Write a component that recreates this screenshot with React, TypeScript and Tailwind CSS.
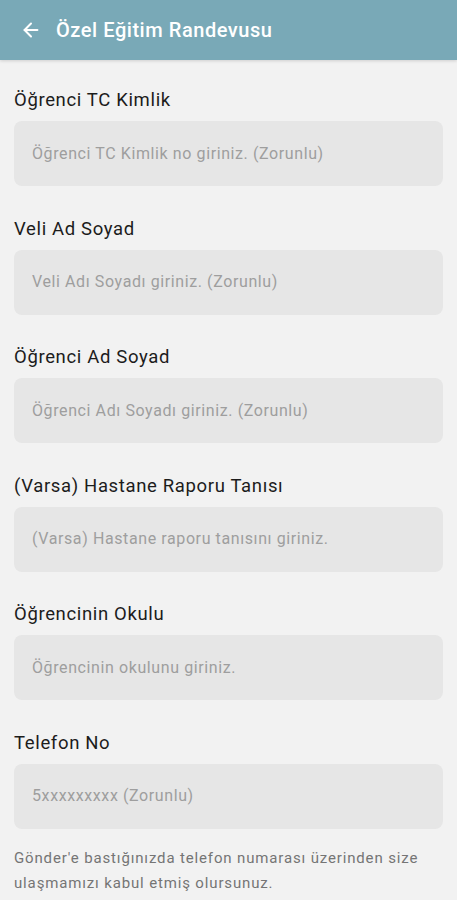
import { ArrowLeft } from 'lucide-react'

const fields = [
  { label: 'Öğrenci TC Kimlik', placeholder: 'Öğrenci TC Kimlik no giriniz. (Zorunlu)' },
  { label: 'Veli Ad Soyad', placeholder: 'Veli Adı Soyadı giriniz. (Zorunlu)' },
  { label: 'Öğrenci Ad Soyad', placeholder: 'Öğrenci Adı Soyadı giriniz. (Zorunlu)' },
  { label: '(Varsa) Hastane Raporu Tanısı', placeholder: '(Varsa) Hastane raporu tanısını giriniz.' },
  { label: 'Öğrencinin Okulu', placeholder: 'Öğrencinin okulunu giriniz.' },
  { label: 'Telefon No', placeholder: '5xxxxxxxxx (Zorunlu)' },
]

export default function App() {
  return (
    <div className="min-h-[900px] bg-[#f2f2f2] font-['Roboto',sans-serif]">
      <header className="h-[60px] bg-[#79a9b7] flex items-center pl-[20px] shadow-[0_1px_3px_rgba(0,0,0,0.15)]">
        <ArrowLeft className="w-[22px] h-[22px] text-white" strokeWidth={2.2} />
        <h1 className="ml-[14px] text-white text-[20px] tracking-[0.55px] font-medium">Özel Eğitim Randevusu</h1>
      </header>

      <div className="px-[14px] pt-[28px]">
        {fields.map((f, i) => (
          <div key={i} className={i > 0 ? 'mt-[30.5px]' : ''}>
            <label className="block h-[24px] leading-[24px] text-[18.5px] tracking-[0.65px] text-[#1c1c1c]">{f.label}</label>
            <div className="mt-[9px] h-[65px] rounded-[8px] bg-[#e6e6e6] flex items-center px-[18px]">
              <input
                className="w-full bg-transparent outline-none text-[16px] tracking-[0.6px] placeholder:text-[#9e9e9e]"
                placeholder={f.placeholder}
              />
            </div>
          </div>
        ))}

        <p className="mt-[17px] text-[15px] tracking-[0.85px] leading-[25px] text-[#757575]">
          Gönder'e bastığınızda telefon numarası üzerinden size ulaşmamızı kabul etmiş olursunuz.
        </p>
      </div>
    </div>
  )
}
